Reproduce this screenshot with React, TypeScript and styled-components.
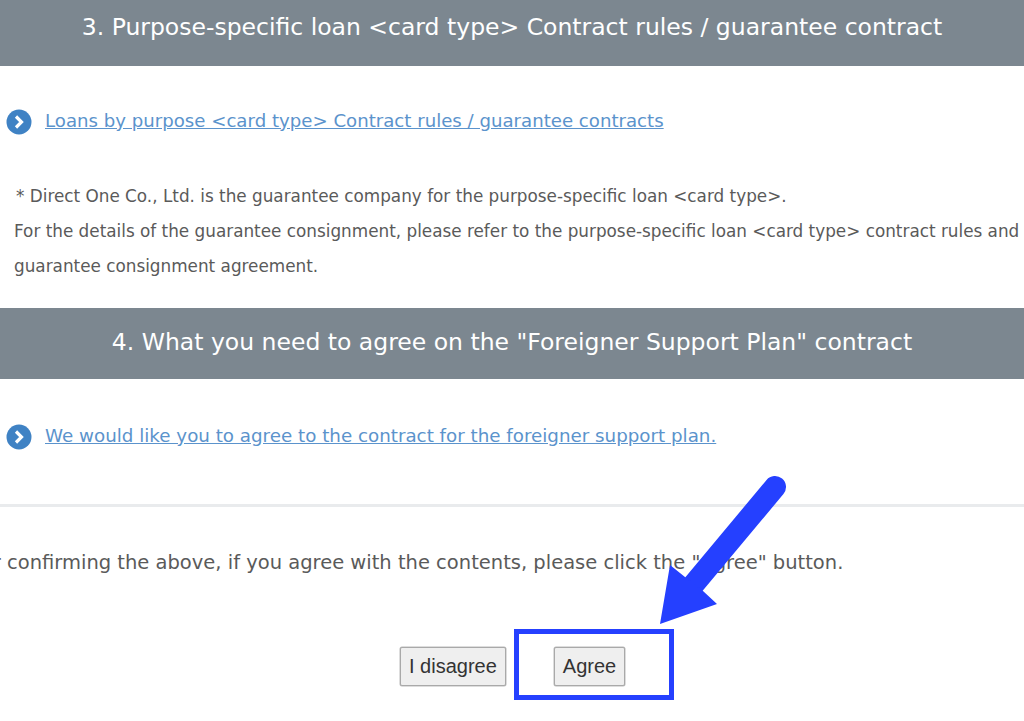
import styled, { createGlobalStyle } from "styled-components";

const GlobalStyle = createGlobalStyle`
  html, body {
    margin: 0;
    padding: 0;
    background: #fff;
  }
  body {
    font-family: "DejaVu Sans", Verdana, sans-serif;
    color: #5a5a5a;
    overflow: hidden;
  }
`;

const Page = styled.div`
  position: relative;
  width: 1024px;
  height: 721px;
  overflow: hidden;
`;

const Heading = styled.h2<{ $height: number; $top?: number; $bottom?: number }>`
  margin: ${(p) => p.$top ?? 0}px 0 0;
  box-sizing: border-box;
  height: ${(p) => p.$height}px;
  padding-bottom: ${(p) => p.$bottom ?? 0}px;
  display: flex;
  align-items: center;
  justify-content: center;
  background: #7c8790;
  color: #fff;
  font-size: 23.5px;
  font-weight: 400;
  white-space: nowrap;
`;

const LinkRow = styled.div<{ $top: number; $bottom: number }>`
  display: flex;
  align-items: center;
  gap: 13px;
  height: 26px;
  padding-left: 6px;
  margin: ${(p) => p.$top}px 0 ${(p) => p.$bottom}px;
`;

const Bullet = styled.svg`
  width: 26px;
  height: 26px;
  flex: none;
  margin-top: 2px;
`;

const DocLink = styled.a<{ $size: number }>`
  margin-bottom: 2px;
  color: #5b93cc;
  font-size: ${(p) => p.$size}px;
  text-decoration: underline;
  white-space: nowrap;
`;

const Notes = styled.div`
  padding-left: 14px;
  font-size: 16.83px;
  line-height: 35px;
  white-space: nowrap;
`;

const NoteLead = styled.span`
  padding-left: 2px;
`;

const Rule = styled.hr`
  margin: 0;
  border: 0;
  height: 3px;
  background: #e9ebed;
`;

const Confirm = styled.p`
  margin: 41px 0 0 -46px;
  font-size: 19.5px;
  line-height: 30px;
  white-space: nowrap;
`;

const Buttons = styled.div`
  display: flex;
  gap: 48px;
  margin: 69px 0 0 400px;
`;

const Button = styled.button`
  height: 39px;
  padding: 0 8px;
  background: #efefef;
  border: 1px solid #a9a9a9;
  border-radius: 2px;
  box-shadow: 0 0 0 0.5px #bbb;
  color: #333;
  font-family: "Liberation Sans", Arial, sans-serif;
  font-size: 20px;
`;

const Highlight = styled.div`
  position: absolute;
  left: 514px;
  top: 629px;
  width: 160px;
  height: 71px;
  box-sizing: border-box;
  border: 5px solid #2540ff;
`;

const Arrow = styled.svg`
  position: absolute;
  left: 650px;
  top: 470px;
  width: 150px;
  height: 170px;
`;

const LinkBullet = () => (
  <Bullet viewBox="0 0 26 26">
    <circle cx="13" cy="13" r="12.5" fill="#3f82c4" />
    <path d="M10 7.5 L15.5 13 L10 18.5" fill="none" stroke="#fff" strokeWidth="3.2" />
  </Bullet>
);

export default function App() {
  return (
    <Page>
      <GlobalStyle />
      <Heading $height={66} $bottom={13}>
        3. Purpose-specific loan &lt;card type&gt; Contract rules / guarantee contract
      </Heading>
      <LinkRow $top={42} $bottom={45}>
        <LinkBullet />
        <DocLink href="#" $size={18.15}>
          Loans by purpose &lt;card type&gt; Contract rules / guarantee contracts
        </DocLink>
      </LinkRow>
      <Notes>
        <NoteLead>* Direct One Co., Ltd. is the guarantee company for the purpose-specific loan &lt;card type&gt;.</NoteLead>
        <br />
        For the details of the guarantee consignment, please refer to the purpose-specific loan &lt;card type&gt; contract rules and
        <br />
        guarantee consignment agreement.
      </Notes>
      <Heading $height={71} $top={24} $bottom={3}>
        4. What you need to agree on the "Foreigner Support Plan" contract
      </Heading>
      <LinkRow $top={44} $bottom={55}>
        <LinkBullet />
        <DocLink href="#" $size={18.27}>
          We would like you to agree to the contract for the foreigner support plan.
        </DocLink>
      </LinkRow>
      <Rule />
      <Confirm>After confirming the above, if you agree with the contents, please click the "Agree" button.</Confirm>
      <Buttons>
        <Button>I disagree</Button>
        <Button>Agree</Button>
      </Buttons>
      <Highlight />
      <Arrow viewBox="0 0 150 170">
        <path d="M125 17 L44 114" fill="none" stroke="#2540ff" strokeWidth="22" strokeLinecap="round" />
        <path d="M10 154 L20 95 L35 107 L53 121 L67 134 Z" fill="#2540ff" />
      </Arrow>
    </Page>
  );
}
